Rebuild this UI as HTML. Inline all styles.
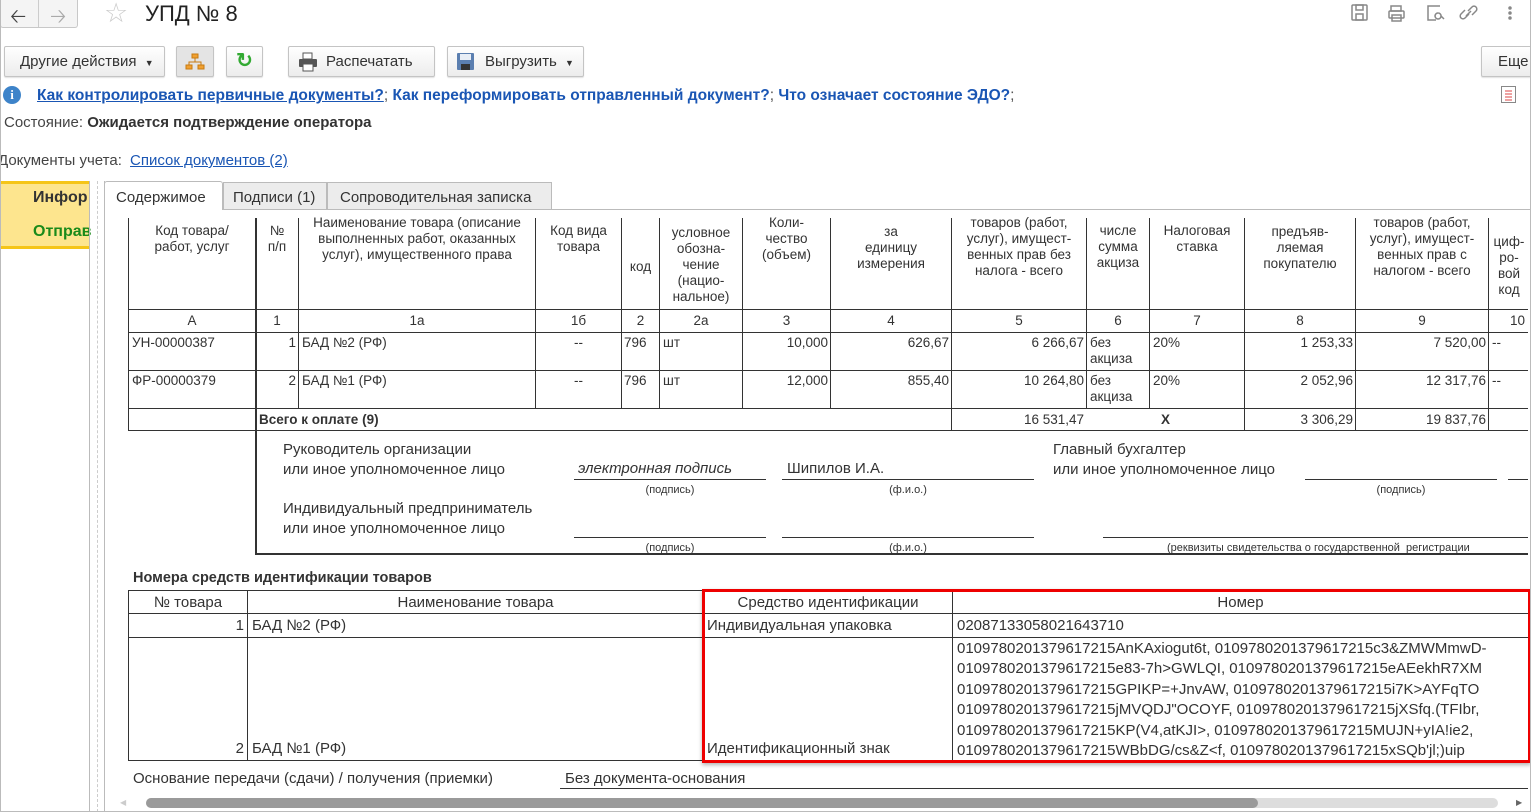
<!DOCTYPE html>
<html><head><meta charset="utf-8"><style>
*{box-sizing:border-box;margin:0;padding:0}
body{width:1531px;height:812px;overflow:hidden;background:#fff;font-family:"Liberation Sans",Arial,sans-serif;color:#333;position:relative;font-size:14px}
.a{position:absolute;white-space:nowrap}
.btn{position:absolute;height:31px;top:46px;border:1px solid #c4c4c4;border-radius:2px;background:linear-gradient(#fff,#ececec);font-size:15px;color:#333;line-height:29px;box-shadow:0 1px 1px rgba(0,0,0,.12)}
.hl{position:absolute;height:1px;background:#333}
.vl{position:absolute;width:1px;background:#333}
.t{position:absolute;font-size:13.5px;color:#333;line-height:16px;text-align:center;white-space:nowrap}
.c{position:absolute;font-size:14px;color:#333;white-space:nowrap}
.r{text-align:right}
a{color:#1a56b4}
</style></head><body>
<!-- top nav -->
<div class="a" style="left:0;top:0;width:78px;height:28px;border:1px solid #c8c8c8;border-top:none;border-radius:0 0 3px 3px;background:#f4f4f4"></div>
<div class="a" style="left:38px;top:0;width:1px;height:27px;background:#ccc"></div>
<div class="a" style="left:10px;top:2px;font-size:20px;color:#444">&#129120;</div>
<div class="a" style="left:50px;top:2px;font-size:20px;color:#aaa">&#129122;</div>
<div class="a" style="left:104px;top:-2px;font-size:27px;color:#ccc">☆</div>
<div class="a" style="left:145px;top:1px;font-size:22px;color:#222">УПД № 8</div>
<svg class="a" style="left:1350px;top:3px" width="170" height="20" fill="none" stroke="#888" stroke-width="1.5">
<rect x="2" y="2" width="15" height="15" rx="1"/><rect x="6" y="2" width="7" height="5"/><rect x="6" y="11" width="7" height="6"/>
<rect x="41" y="3" width="10" height="5"/><rect x="39" y="8" width="15" height="7" rx="1"/><rect x="42" y="12" width="9" height="6"/>
<path d="M86 17 H78 V3 H90 M88 10 a3 3 0 1 0 .1 0 M91 13 l3 3"/>
<path d="M119 11 l-4 4 a2.5 2.5 0 0 1 -4 -4 l4 -4 M118 8 l4 -4 a2.5 2.5 0 0 1 4 4 l-4 4 M116 13 l5 -5"/>
<circle cx="160" cy="5" r="1" fill="#888"/><circle cx="160" cy="10" r="1" fill="#888"/><circle cx="160" cy="15" r="1" fill="#888"/>
</svg>
<!-- toolbar -->
<div class="btn" style="left:4px;width:161px;padding-left:15px">Другие действия <span style="font-size:9px;margin-left:4px">▼</span></div>
<div class="btn" style="left:176px;width:38px;background:#e4e4e4"><svg width="36" height="29"><g fill="#f0a030" stroke="#c77a10"><rect x="15" y="7" width="6" height="4"/><rect x="9" y="18" width="6" height="4"/><rect x="21" y="18" width="6" height="4"/></g><path d="M18 11 V15 M12 18 V15 H24 V18" stroke="#c77a10" fill="none"/></svg></div>
<div class="btn" style="left:226px;width:37px;text-align:center;color:#3a3;font-size:20px;font-weight:bold">↻</div>
<div class="btn" style="left:288px;width:147px;padding-left:37px">Распечатать</div>
<svg class="a" style="left:298px;top:52px" width="20" height="20"><rect x="5" y="1" width="9" height="6" fill="#fff" stroke="#555"/><rect x="1" y="7" width="18" height="8" rx="1" fill="#555"/><rect x="5" y="12" width="10" height="7" fill="#fff" stroke="#555"/></svg>
<div class="btn" style="left:447px;width:137px;padding-left:37px">Выгрузить <span style="font-size:9px;margin-left:4px">▼</span></div>
<svg class="a" style="left:456px;top:52px" width="20" height="20"><rect x="1" y="1" width="17" height="17" rx="1" fill="#5b7fb0"/><rect x="4" y="2" width="11" height="6" fill="#e8eef6"/><rect x="5" y="12" width="9" height="6" fill="#333"/></svg>
<div class="btn" style="left:1481px;width:60px;padding-left:16px">Еще</div>
<!-- links -->
<div class="a" style="left:3px;top:86px;width:18px;height:18px;border-radius:50%;background:#3d83c9;color:#fff;font-weight:bold;font-size:13px;text-align:center;line-height:18px;font-family:'Liberation Serif',serif">i</div>
<div class="a" style="left:37px;top:87px;font-size:15.5px;font-weight:bold;color:#1a56b4"><a style="text-decoration:underline">Как контролировать первичные документы?</a><span style="color:#555;font-weight:normal">;</span> <a>Как переформировать отправленный документ?</a><span style="color:#555;font-weight:normal">;</span> <a>Что означает состояние ЭДО?</a><span style="color:#555;font-weight:normal">;</span></div>
<svg class="a" style="left:1501px;top:86px" width="16" height="18" stroke="#888" fill="none"><rect x=".5" y=".5" width="14" height="16"/><path d="M4 5 H11 M4 8 H11 M4 11 H11 M4 14 H11" stroke="#d44"/></svg>
<div class="a" style="left:4px;top:114px;font-size:15px;color:#444">Состояние: <b style="color:#333">Ожидается подтверждение оператора</b></div>
<div class="a" style="left:-2px;top:152px;font-size:15px;color:#444">Документы учета: <a style="text-decoration:underline;margin-left:4px">Список документов (2)</a></div>
<!-- sidebar -->
<div class="a" style="left:0;top:181px;width:89px;height:68px;background:#fde58e;border-top:3px solid #f5c518;border-bottom:3px solid #f5c518"></div>
<div class="a" style="left:33px;top:189px;font-size:16px;font-weight:bold;color:#333">Инфор</div>
<div class="a" style="left:33px;top:223px;font-size:16px;font-weight:bold;color:#1a8a1a">Отправ</div>
<div class="a" style="left:89px;top:181px;width:1px;height:631px;background:#bbb"></div>
<div class="a" style="left:97px;top:181px;width:0;height:631px;border-left:1px dashed #ccc"></div>
<!-- tabs -->
<div class="a" style="left:104px;top:209px;width:1427px;height:1px;background:#bbb"></div>
<div class="a" style="left:104px;top:181px;width:1px;height:631px;background:#bbb"></div>
<div class="a" style="left:104px;top:181px;width:119px;height:30px;background:#fff;border:1px solid #bbb;border-bottom:none;border-radius:3px 3px 0 0;font-size:15px;padding:7px 0 0 11px">Содержимое</div>
<div class="a" style="left:223px;top:182px;width:104px;height:28px;background:#ececec;border:1px solid #bbb;font-size:15px;padding:6px 0 0 9px">Подписи (1)</div>
<div class="a" style="left:327px;top:182px;width:225px;height:28px;background:#ececec;border:1px solid #bbb;font-size:15px;padding:6px 0 0 12px">Сопроводительная записка</div>
<!-- main table lines -->
<div class="hl" style="left:129px;top:309px;width:1399px"></div>
<div class="hl" style="left:129px;top:332px;width:1399px"></div>
<div class="hl" style="left:129px;top:370px;width:1399px"></div>
<div class="hl" style="left:129px;top:408px;width:1399px"></div>
<div class="hl" style="left:129px;top:430px;width:1399px"></div>
<div class="vl" style="left:128px;top:218px;height:213px"></div>
<div class="vl" style="left:255px;top:218px;height:336px;width:2px"></div>
<div class="vl" style="left:298px;top:218px;height:190px"></div>
<div class="vl" style="left:535px;top:218px;height:190px"></div>
<div class="vl" style="left:621px;top:218px;height:190px"></div>
<div class="vl" style="left:659px;top:218px;height:190px"></div>
<div class="vl" style="left:742px;top:218px;height:190px"></div>
<div class="vl" style="left:830px;top:218px;height:190px"></div>
<div class="vl" style="left:951px;top:218px;height:213px"></div>
<div class="vl" style="left:1086px;top:218px;height:190px"></div>
<div class="vl" style="left:1149px;top:218px;height:190px"></div>
<div class="vl" style="left:1244px;top:218px;height:213px"></div>
<div class="vl" style="left:1355px;top:218px;height:213px"></div>
<div class="vl" style="left:1488px;top:218px;height:213px"></div>
<div class="a" style="left:105px;top:210px;width:1426px;height:8px;background:#fff"></div>
<!-- headers -->
<div class="t" style="left:129px;width:126px;top:223px">Код товара/<br>работ, услуг</div>
<div class="t" style="left:256px;width:42px;top:223px">№<br>п/п</div>
<div class="t" style="left:299px;width:236px;top:215px">Наименование товара (описание<br>выполненных работ, оказанных<br>услуг), имущественного права</div>
<div class="t" style="left:536px;width:85px;top:223px">Код вида<br>товара</div>
<div class="t" style="left:622px;width:37px;top:259px">код</div>
<div class="t" style="left:660px;width:82px;top:225px">условное<br>обозна-<br>чение<br>(нацио-<br>нальное)</div>
<div class="t" style="left:743px;width:87px;top:215px">Коли-<br>чество<br>(объем)</div>
<div class="t" style="left:831px;width:120px;top:224px">за<br>единицу<br>измерения</div>
<div class="t" style="left:952px;width:134px;top:215px">товаров (работ,<br>услуг), имущест-<br>венных прав без<br>налога - всего</div>
<div class="t" style="left:1087px;width:62px;top:223px">числе<br>сумма<br>акциза</div>
<div class="t" style="left:1150px;width:94px;top:223px">Налоговая<br>ставка</div>
<div class="t" style="left:1245px;width:110px;top:224px">предъяв-<br>ляемая<br>покупателю</div>
<div class="t" style="left:1356px;width:132px;top:215px">товаров (работ,<br>услуг), имущест-<br>венных прав с<br>налогом - всего</div>
<div class="t" style="left:1489px;width:40px;top:234px">циф-<br>ро-<br>вой<br>код</div>
<!-- numbers row -->
<div class="t" style="left:129px;width:126px;top:313px">А</div>
<div class="t" style="left:256px;width:42px;top:313px">1</div>
<div class="t" style="left:299px;width:236px;top:313px">1а</div>
<div class="t" style="left:536px;width:85px;top:313px">1б</div>
<div class="t" style="left:622px;width:37px;top:313px">2</div>
<div class="t" style="left:660px;width:82px;top:313px">2а</div>
<div class="t" style="left:743px;width:87px;top:313px">3</div>
<div class="t" style="left:831px;width:120px;top:313px">4</div>
<div class="t" style="left:952px;width:134px;top:313px">5</div>
<div class="t" style="left:1087px;width:62px;top:313px">6</div>
<div class="t" style="left:1150px;width:94px;top:313px">7</div>
<div class="t" style="left:1245px;width:110px;top:313px">8</div>
<div class="t" style="left:1356px;width:132px;top:313px">9</div>
<div class="t" style="left:1489px;width:36px;top:313px;text-align:right">10</div>
<!-- data rows -->
<div class="t" style="left:132px;top:335px;text-align:left">УН-00000387</div>
<div class="t" style="left:256px;width:40px;top:335px;text-align:right">1</div>
<div class="t" style="left:302px;top:335px;text-align:left">БАД №2 (РФ)</div>
<div class="t" style="left:536px;width:85px;top:335px">--</div>
<div class="t" style="left:624px;top:335px">796</div>
<div class="t" style="left:663px;top:335px">шт</div>
<div class="t" style="left:743px;width:85px;top:335px;text-align:right">10,000</div>
<div class="t" style="left:831px;width:118px;top:335px;text-align:right">626,67</div>
<div class="t" style="left:952px;width:132px;top:335px;text-align:right">6 266,67</div>
<div class="t" style="left:1090px;top:335px;text-align:left">без<br>акциза</div>
<div class="t" style="left:1153px;top:335px">20%</div>
<div class="t" style="left:1245px;width:108px;top:335px;text-align:right">1 253,33</div>
<div class="t" style="left:1356px;width:130px;top:335px;text-align:right">7 520,00</div>
<div class="t" style="left:1492px;top:335px">--</div>
<div class="t" style="left:132px;top:373px;text-align:left">ФР-00000379</div>
<div class="t" style="left:256px;width:40px;top:373px;text-align:right">2</div>
<div class="t" style="left:302px;top:373px;text-align:left">БАД №1 (РФ)</div>
<div class="t" style="left:536px;width:85px;top:373px">--</div>
<div class="t" style="left:624px;top:373px">796</div>
<div class="t" style="left:663px;top:373px">шт</div>
<div class="t" style="left:743px;width:85px;top:373px;text-align:right">12,000</div>
<div class="t" style="left:831px;width:118px;top:373px;text-align:right">855,40</div>
<div class="t" style="left:952px;width:132px;top:373px;text-align:right">10 264,80</div>
<div class="t" style="left:1090px;top:373px;text-align:left">без<br>акциза</div>
<div class="t" style="left:1153px;top:373px">20%</div>
<div class="t" style="left:1245px;width:108px;top:373px;text-align:right">2 052,96</div>
<div class="t" style="left:1356px;width:130px;top:373px;text-align:right">12 317,76</div>
<div class="t" style="left:1492px;top:373px">--</div>
<div class="t" style="left:259px;top:412px;font-weight:bold;text-align:left">Всего к оплате (9)</div>
<div class="t" style="left:952px;width:132px;top:412px;text-align:right">16 531,47</div>
<div class="t" style="left:1087px;width:157px;top:412px;font-weight:bold">X</div>
<div class="t" style="left:1245px;width:108px;top:412px;text-align:right">3 306,29</div>
<div class="t" style="left:1356px;width:130px;top:412px;text-align:right">19 837,76</div>
<!-- signatures -->
<div class="c" style="left:283px;top:440px;font-size:15px;line-height:20px">Руководитель организации<br>или иное уполномоченное лицо</div>
<div class="c" style="left:578px;top:460px;font-size:15px;font-style:italic">электронная подпись</div>
<div class="hl" style="left:574px;top:479px;width:192px"></div>
<div class="t" style="left:574px;width:192px;top:482px;font-size:11px">(подпись)</div>
<div class="c" style="left:787px;top:460px;font-size:15px">Шипилов И.А.</div>
<div class="hl" style="left:782px;top:479px;width:252px"></div>
<div class="t" style="left:782px;width:252px;top:482px;font-size:11px">(ф.и.о.)</div>
<div class="c" style="left:1053px;top:440px;font-size:15px;line-height:20px">Главный бухгалтер<br>или иное уполномоченное лицо</div>
<div class="hl" style="left:1305px;top:479px;width:192px"></div>
<div class="hl" style="left:1508px;top:479px;width:20px"></div>
<div class="t" style="left:1305px;width:192px;top:482px;font-size:11px">(подпись)</div>
<div class="c" style="left:283px;top:499px;font-size:15px;line-height:20px">Индивидуальный предприниматель<br>или иное уполномоченное лицо</div>
<div class="hl" style="left:574px;top:537px;width:192px"></div>
<div class="t" style="left:574px;width:192px;top:540px;font-size:11px">(подпись)</div>
<div class="hl" style="left:782px;top:537px;width:252px"></div>
<div class="t" style="left:782px;width:252px;top:540px;font-size:11px">(ф.и.о.)</div>
<div class="hl" style="left:1103px;top:537px;width:425px"></div>
<div class="t" style="left:1167px;top:540px;font-size:11px">(реквизиты свидетельства о государственной&nbsp; регистрации</div>
<div class="hl" style="left:255px;top:553px;width:1273px;height:2px"></div>
<!-- ident table -->
<div class="c" style="left:133px;top:570px;font-weight:bold;font-size:14.5px">Номера средств идентификации товаров</div>
<div class="hl" style="left:128px;top:590px;width:1400px"></div>
<div class="hl" style="left:128px;top:613px;width:1400px"></div>
<div class="hl" style="left:128px;top:637px;width:1400px"></div>
<div class="hl" style="left:128px;top:760px;width:1400px"></div>
<div class="vl" style="left:128px;top:590px;height:171px"></div>
<div class="vl" style="left:247px;top:590px;height:171px"></div>
<div class="vl" style="left:703px;top:590px;height:171px"></div>
<div class="vl" style="left:952px;top:590px;height:171px"></div>
<div class="c" style="left:129px;width:118px;top:594px;text-align:center;font-size:15px">№ товара</div>
<div class="c" style="left:248px;width:455px;top:594px;text-align:center;font-size:15px">Наименование товара</div>
<div class="c" style="left:704px;width:248px;top:594px;text-align:center;font-size:15px">Средство идентификации</div>
<div class="c" style="left:953px;width:575px;top:594px;text-align:center;font-size:15px">Номер</div>
<div class="c r" style="left:129px;width:115px;top:617px;font-size:15px">1</div>
<div class="c" style="left:252px;top:617px;font-size:15px">БАД №2 (РФ)</div>
<div class="c" style="left:707px;top:617px;font-size:15px">Индивидуальная упаковка</div>
<div class="c" style="left:957px;top:617px;font-size:15px">02087133058021643710</div>
<div class="c r" style="left:129px;width:115px;top:740px;font-size:15px">2</div>
<div class="c" style="left:252px;top:740px;font-size:15px">БАД №1 (РФ)</div>
<div class="c" style="left:707px;top:740px;font-size:15px">Идентификационный знак</div>
<div class="c" style="left:957px;top:639px;font-size:15px;line-height:20.4px;width:571px;overflow:hidden">010978020137961721​5AnKAxiogut6t, 010978020137961721​5c3&amp;ZMWMmwD-<br>010978020137961721​5e83-7h&gt;GWLQI, 010978020137961721​5eAEekhR7XM<br>010978020137961721​5GPIKP=+JnvAW, 010978020137961721​5i7K&gt;AYFqTO<br>010978020137961721​5jMVQDJ"OCOYF, 010978020137961721​5jXSfq.(TFIbr,<br>010978020137961721​5KP(V4,atKJI&gt;, 010978020137961721​5MUJN+yIA!ie2,<br>010978020137961721​5WBbDG/cs&amp;Z&lt;f, 010978020137961721​5xSQb'jl;)uip</div>
<div class="a" style="left:702px;top:589px;width:829px;height:174px;border:3px solid #e00;box-shadow:0 2px 4px rgba(0,0,0,.3)"></div>
<!-- footer -->
<div class="c" style="left:133px;top:770px;font-size:15px">Основание передачи (сдачи) / получения (приемки)</div>
<div class="c" style="left:565px;top:770px;font-size:15px">Без документа-основания</div>
<div class="hl" style="left:560px;top:788px;width:968px"></div>
<div class="a" style="left:105px;top:797px;width:1426px;height:15px;background:#fff"></div>
<div class="a" style="left:146px;top:798px;width:1352px;height:10px;border-radius:5px;background:#ddd"></div>
<div class="a" style="left:146px;top:798px;width:1112px;height:10px;border-radius:5px;background:#9a9a9a"></div>
<div class="a" style="left:1516px;top:798px;font-size:8px;color:#666">▶</div>
<div class="a" style="left:120px;top:798px;font-size:8px;color:#ccc">◀</div>
<div class="a" style="left:0;top:0;width:1531px;height:812px;border:1px solid #bbb;border-top:none;pointer-events:none"></div>
</body></html>
